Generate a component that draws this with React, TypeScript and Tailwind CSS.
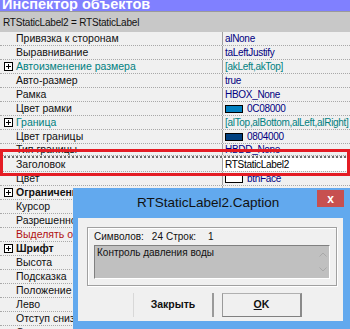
import React from 'react';

type Row = {
  label: string;
  value: string;
  plus?: boolean;
  bold?: boolean;
  teal?: boolean;
  red?: boolean;
  swatch?: string;
  selected?: boolean;
  short?: boolean;
};

const rows: Row[] = [
  { label: 'Привязка к сторонам', value: 'alNone' },
  { label: 'Выравнивание', value: 'taLeftJustify' },
  { label: 'Автоизменение размера', value: '[akLeft,akTop]', plus: true, teal: true },
  { label: 'Авто-размер', value: 'true' },
  { label: 'Рамка', value: 'HBOX_None' },
  { label: 'Цвет рамки', value: '0C08000', swatch: '#0080c0' },
  { label: 'Граница', value: '[alTop,alBottom,alLeft,alRight]', plus: true, teal: true },
  { label: 'Цвет границы', value: '0804000', swatch: '#004080' },
  { label: 'Тип границы', value: 'HBDD_None', short: true },
  { label: 'Заголовок', value: 'RTStaticLabel2', selected: true },
  { label: 'Цвет', value: 'btnFace', swatch: '#ffffff' },
  { label: 'Ограничения', value: '(TSizeConstraints)', plus: true, bold: true },
  { label: 'Курсор', value: 'crDefault' },
  { label: 'Разрешенное действие', value: 'true' },
  { label: 'Выделять объект', value: 'false', red: true },
  { label: 'Шрифт', value: '(TFont)', plus: true, bold: true },
  { label: 'Высота', value: '17' },
  { label: 'Подсказка', value: '' },
  { label: 'Положение подсказки', value: 'hpTop' },
  { label: 'Лево', value: '16' },
  { label: 'Отступ снизу', value: '0' },
  { label: 'Отступ сверху', value: '0' },
];

const PlusBox = () => (
  <svg width="9" height="9" viewBox="0 0 9 9" className="mr-[3px] shrink-0">
    <rect x="0.5" y="0.5" width="8" height="8" fill="#fff" stroke="#000" />
    <path d="M2 4.5h5M4.5 2v5" stroke="#000" />
  </svg>
);

const PropRow = ({ row }: { row: Row }) => {
  const height = row.selected ? 'h-[16px] border-t-2 border-t-[#6b6b6b]' : row.short ? 'h-[12px]' : 'h-[14px]';
  const labelColor = row.teal ? 'text-[#008080]' : row.red ? 'text-[#b01010]' : 'text-[#101010]';
  const valueColor = row.selected ? 'text-black' : row.teal ? 'text-[#008080]' : 'text-[#000080]';

  return (
    <div className={`flex ${height} border-b border-dotted border-b-[#a8a8a8] overflow-hidden`}>
      <div
        className={`flex w-[222px] shrink-0 items-center whitespace-nowrap text-[10.5px] ${row.plus ? 'pl-[4px]' : 'pl-[16px]'} ${labelColor} ${row.bold ? 'font-bold' : ''}`}
      >
        {row.plus && <PlusBox />}
        {row.label}
      </div>
      <div
        className={`flex flex-1 items-center whitespace-nowrap border-l border-l-[#a0a0a0] pl-[2px] text-[10px] tracking-[-0.3px] ${valueColor} ${row.selected ? 'bg-white' : ''}`}
      >
        {row.swatch && (
          <span
            className="mr-[4px] inline-block h-[8px] w-[18px] border border-black"
            style={{ backgroundColor: row.swatch }}
          />
        )}
        {row.value}
      </div>
    </div>
  );
};

const Chevron = ({ up }: { up?: boolean }) => (
  <svg width="8" height="5" viewBox="0 0 8 5">
    <path d={up ? 'M0.5 4.5L4 1l3.5 3.5' : 'M0.5 0.5L4 4l3.5-3.5'} stroke="#a8a8a8" fill="none" />
  </svg>
);

const CaptionDialog = () => (
  <div className="absolute left-[73px] top-[188px] flex h-[141px] w-[277px] flex-col bg-[#62a9ee] pb-[8px] pl-[5px] pr-[7px]">
    <div className="relative flex h-[30px] shrink-0 items-center pl-[59px] text-[13.5px] text-[#111]">
      RTStaticLabel2.Caption
      <div className="absolute right-[-1px] top-[2px] flex h-[17px] w-[27px] items-center justify-center bg-[#c75050] text-[12px] font-bold leading-none text-white">
        x
      </div>
    </div>
    <div className="flex-1 bg-[#f0f0f0] pl-[9px] pt-[9px]">
      <div className="h-[59px] w-[250px] border border-[#a0a0a0] pl-[6px] pt-[2px] shadow-[inset_1px_1px_0_#fff,1px_1px_0_#fff]">
        <div className="flex h-[12px] items-center text-[10px] text-[#111]">
          <span>Символов:</span>
          <span className="ml-[8px]">24</span>
          <span className="ml-[3px]">Строк:</span>
          <span className="ml-[12px]">1</span>
        </div>
        <div className="mt-[3px] flex h-[34px] w-[236px] border-b border-l border-r border-t border-b-white border-l-[#808080] border-r-white border-t-[#808080] bg-[#c0c0c0]">
          <div className="flex-1 pl-[2px] pt-[1px] text-[10px] leading-[12px] text-[#111]">
            Контроль давления воды
          </div>
          <div className="flex w-[13px] flex-col items-center justify-between py-[6px]">
            <Chevron up />
            <Chevron />
          </div>
        </div>
      </div>
      <div className="ml-[46px] mt-[7px] flex gap-[8px]">
        <div className="flex h-[24px] w-[81px] items-center justify-center border-l border-r-2 border-l-[#d8d8d8] border-r-[#9a9a9a] text-[10.5px] font-bold text-[#111]">
          Закрыть
        </div>
        <div className="flex h-[24px] w-[80px] items-center justify-center border-b border-l border-r-2 border-t border-b-[#808080] border-l-[#9a9a9a] border-r-[#8a8a8a] border-t-[#b0b0b0] text-[10.5px] font-bold text-[#111]">
          <span>
            <span className="underline">O</span>K
          </span>
        </div>
      </div>
    </div>
  </div>
);

export default function App() {
  return (
    <div className="relative h-[329px] w-[350px] overflow-hidden bg-[#f0f0f0] font-['Liberation_Sans',Arial,sans-serif]">
      <div className="h-[11px] overflow-hidden bg-[#8080ff]">
        <div className="-mt-[3px] pl-[2px] text-[14.5px] font-bold leading-[14px] text-white">Инспектор объектов</div>
      </div>
      <div className="flex h-[21px] items-center border-t border-t-[#9a9a9a] bg-[#c8c8c8] pl-[3px] text-[10px] tracking-[-0.2px] text-[#111]">
        RTStaticLabel2 = RTStaticLabel
      </div>
      <div className="flex flex-col">
        {rows.map(row => (
          <PropRow key={row.label} row={row} />
        ))}
      </div>
      <div className="absolute left-0 top-[149px] h-[27px] w-[350px] border-[3px] border-[#e41c24]" />
      <CaptionDialog />
    </div>
  );
}
